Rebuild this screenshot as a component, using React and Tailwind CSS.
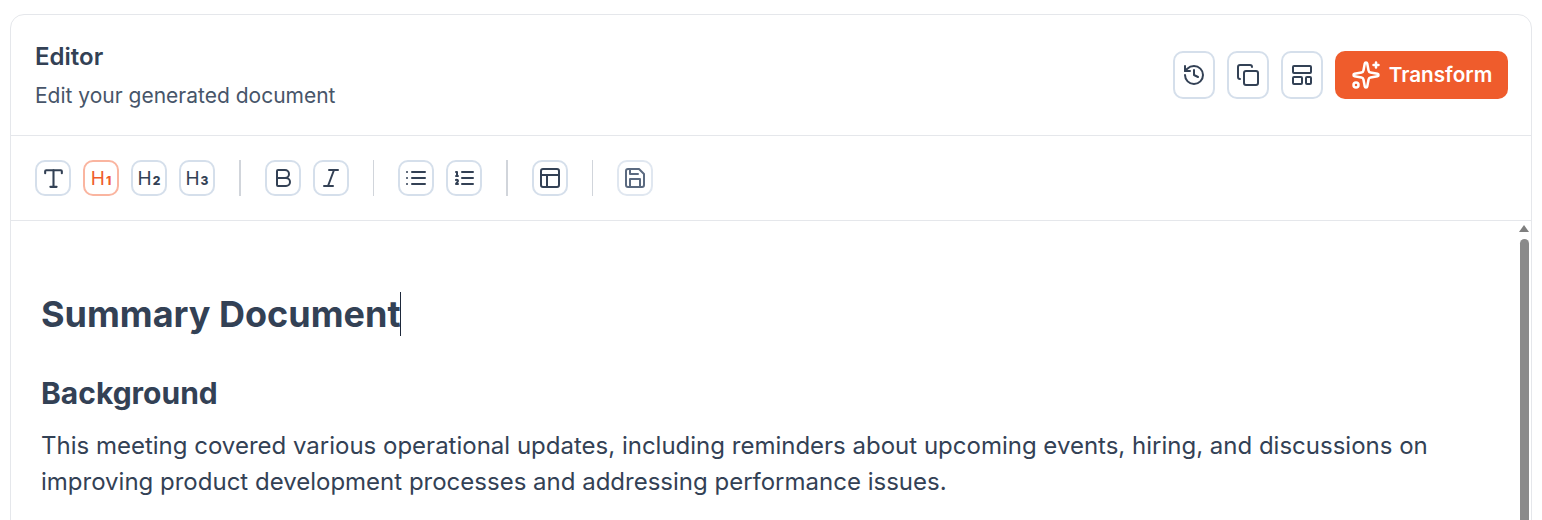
import React from "react";
import { History, Copy, LayoutTemplate, Sparkles, Type, Bold, Italic, PanelsTopLeft } from "lucide-react";

const Svg = ({ children }) => (
  <svg width="24" height="24" viewBox="0 0 24 24" fill="none" stroke="currentColor" strokeWidth="2" strokeLinecap="round" strokeLinejoin="round">
    {children}
  </svg>
);

const ListIcon = () => (
  <Svg>
    <path d="M8 6h13M8 12h13M8 18h13M3 6h.01M3 12h.01M3 18h.01" />
  </Svg>
);

const ListOrderedIcon = () => (
  <Svg>
    <path d="M10 6h11M10 12h11M10 18h11M4 6h1v4M4 10h2M6 18H4c0-1 2-2 2-3s-1-1.5-2-1" />
  </Svg>
);

const SaveIcon = () => (
  <Svg>
    <path d="M19 21H5a2 2 0 0 1-2-2V5a2 2 0 0 1 2-2h11l5 5v11a2 2 0 0 1-2 2z" />
    <path d="M17 21v-8H7v8M7 3v5h8" />
  </Svg>
);

const HeadIcon = ({ n, color = "text-[#334155]" }) => (
  <span className={`flex items-baseline font-['Inter',sans-serif] ${color}`}>
    <span className="text-[19px] leading-none font-normal">H</span>
    <span className="text-[12px] leading-none font-extrabold ml-[1px]">{n}</span>
  </span>
);

const ToolBtn = ({ children, active, muted }) => {
  let tone = "border-[#d5dfeb] text-[#334155]";
  if (active) tone = "border-[#fab5a0] text-[#334155]";
  if (muted) tone = "border-[#e0e7f0] text-[#5b6a80]";
  return (
    <button className={`w-9 h-9 flex items-center justify-center rounded-[10px] border-2 bg-white ${tone}`}>
      {children}
    </button>
  );
};

const HeadBtn = ({ children }) => (
  <button className="w-[42px] h-[48px] flex items-center justify-center rounded-[10px] border-2 border-[#d5dfeb] bg-white text-[#334155]">
    {children}
  </button>
);

const Divider = ({ thick }) => <div className={`h-9 bg-[#d1d5db] ${thick ? "w-[2px]" : "w-px"}`} />;

export default function App() {
  return (
    <div className="h-[520px] overflow-hidden bg-white pt-[14px] px-[10px] font-['Inter',sans-serif]">
      <div className="border border-[#e5e7eb] rounded-t-[14px] h-[520px]">
        <div className="h-[121px] flex items-center justify-between pl-6 pr-[23px] border-b border-[#e5e7eb]">
          <div className="pt-[3px]">
            <h2 className="text-[24px] leading-[28px] font-semibold text-[#334155]">Editor</h2>
            <p className="text-[21px] leading-[28px] mt-[11px] text-[#475569]">Edit your generated document</p>
          </div>
          <div className="flex items-center gap-3">
            <HeadBtn><History size={24} /></HeadBtn>
            <HeadBtn><Copy size={24} /></HeadBtn>
            <HeadBtn><LayoutTemplate size={24} /></HeadBtn>
            <button className="h-[48px] w-[173px] flex items-center justify-center gap-[8px] rounded-[10px] bg-[#ef5c2c] text-white text-[20.7px] font-semibold">
              <Sparkles size={30} />
              Transform
            </button>
          </div>
        </div>

        <div className="h-[85px] flex items-center pl-6 border-b border-[#e5e7eb]">
          <div className="flex gap-3">
            <ToolBtn><Type size={25} /></ToolBtn>
            <ToolBtn active><HeadIcon n="1" color="text-[#ef5c2c]" /></ToolBtn>
            <ToolBtn><HeadIcon n="2" /></ToolBtn>
            <ToolBtn><HeadIcon n="3" /></ToolBtn>
          </div>
          <div className="mx-6"><Divider thick /></div>
          <div className="flex gap-3">
            <ToolBtn><Bold size={24} /></ToolBtn>
            <ToolBtn><Italic size={24} /></ToolBtn>
          </div>
          <div className="mx-6"><Divider /></div>
          <div className="flex gap-3">
            <ToolBtn><ListIcon /></ToolBtn>
            <ToolBtn><ListOrderedIcon /></ToolBtn>
          </div>
          <div className="mx-6"><Divider thick /></div>
          <ToolBtn><PanelsTopLeft size={24} /></ToolBtn>
          <div className="mx-6"><Divider /></div>
          <ToolBtn muted><SaveIcon /></ToolBtn>
        </div>

        <div className="flex">
          <div className="flex-1 pl-[30px] pr-[70px] pt-[70px]">
            <h1 className="text-[36px] leading-[46px] font-bold text-[#334155]">
              <span className="relative">
                Summary Document
                <span className="absolute right-0 top-0 bottom-0 w-px bg-[#1e293b]" />
              </span>
            </h1>
            <h2 className="text-[30px] leading-[40px] font-bold text-[#334155] mt-[36px]">Background</h2>
            <p className="text-[24px] leading-[36px] text-[#334155] mt-[15px]">
              This meeting covered various operational updates, including reminders about upcoming events, hiring, and discussions on improving product development processes and addressing performance issues.
            </p>
          </div>
          <div className="w-[15px] shrink-0 flex flex-col items-center pt-[4px] pl-px">
            <div className="w-0 h-0 border-x-[5px] border-x-transparent border-b-[7px] border-b-[#7f7f7f]" />
            <div className="w-[9px] h-[300px] mt-[7px] rounded-t-full bg-[#8a8a8a]" />
          </div>
        </div>
      </div>
    </div>
  );
}
